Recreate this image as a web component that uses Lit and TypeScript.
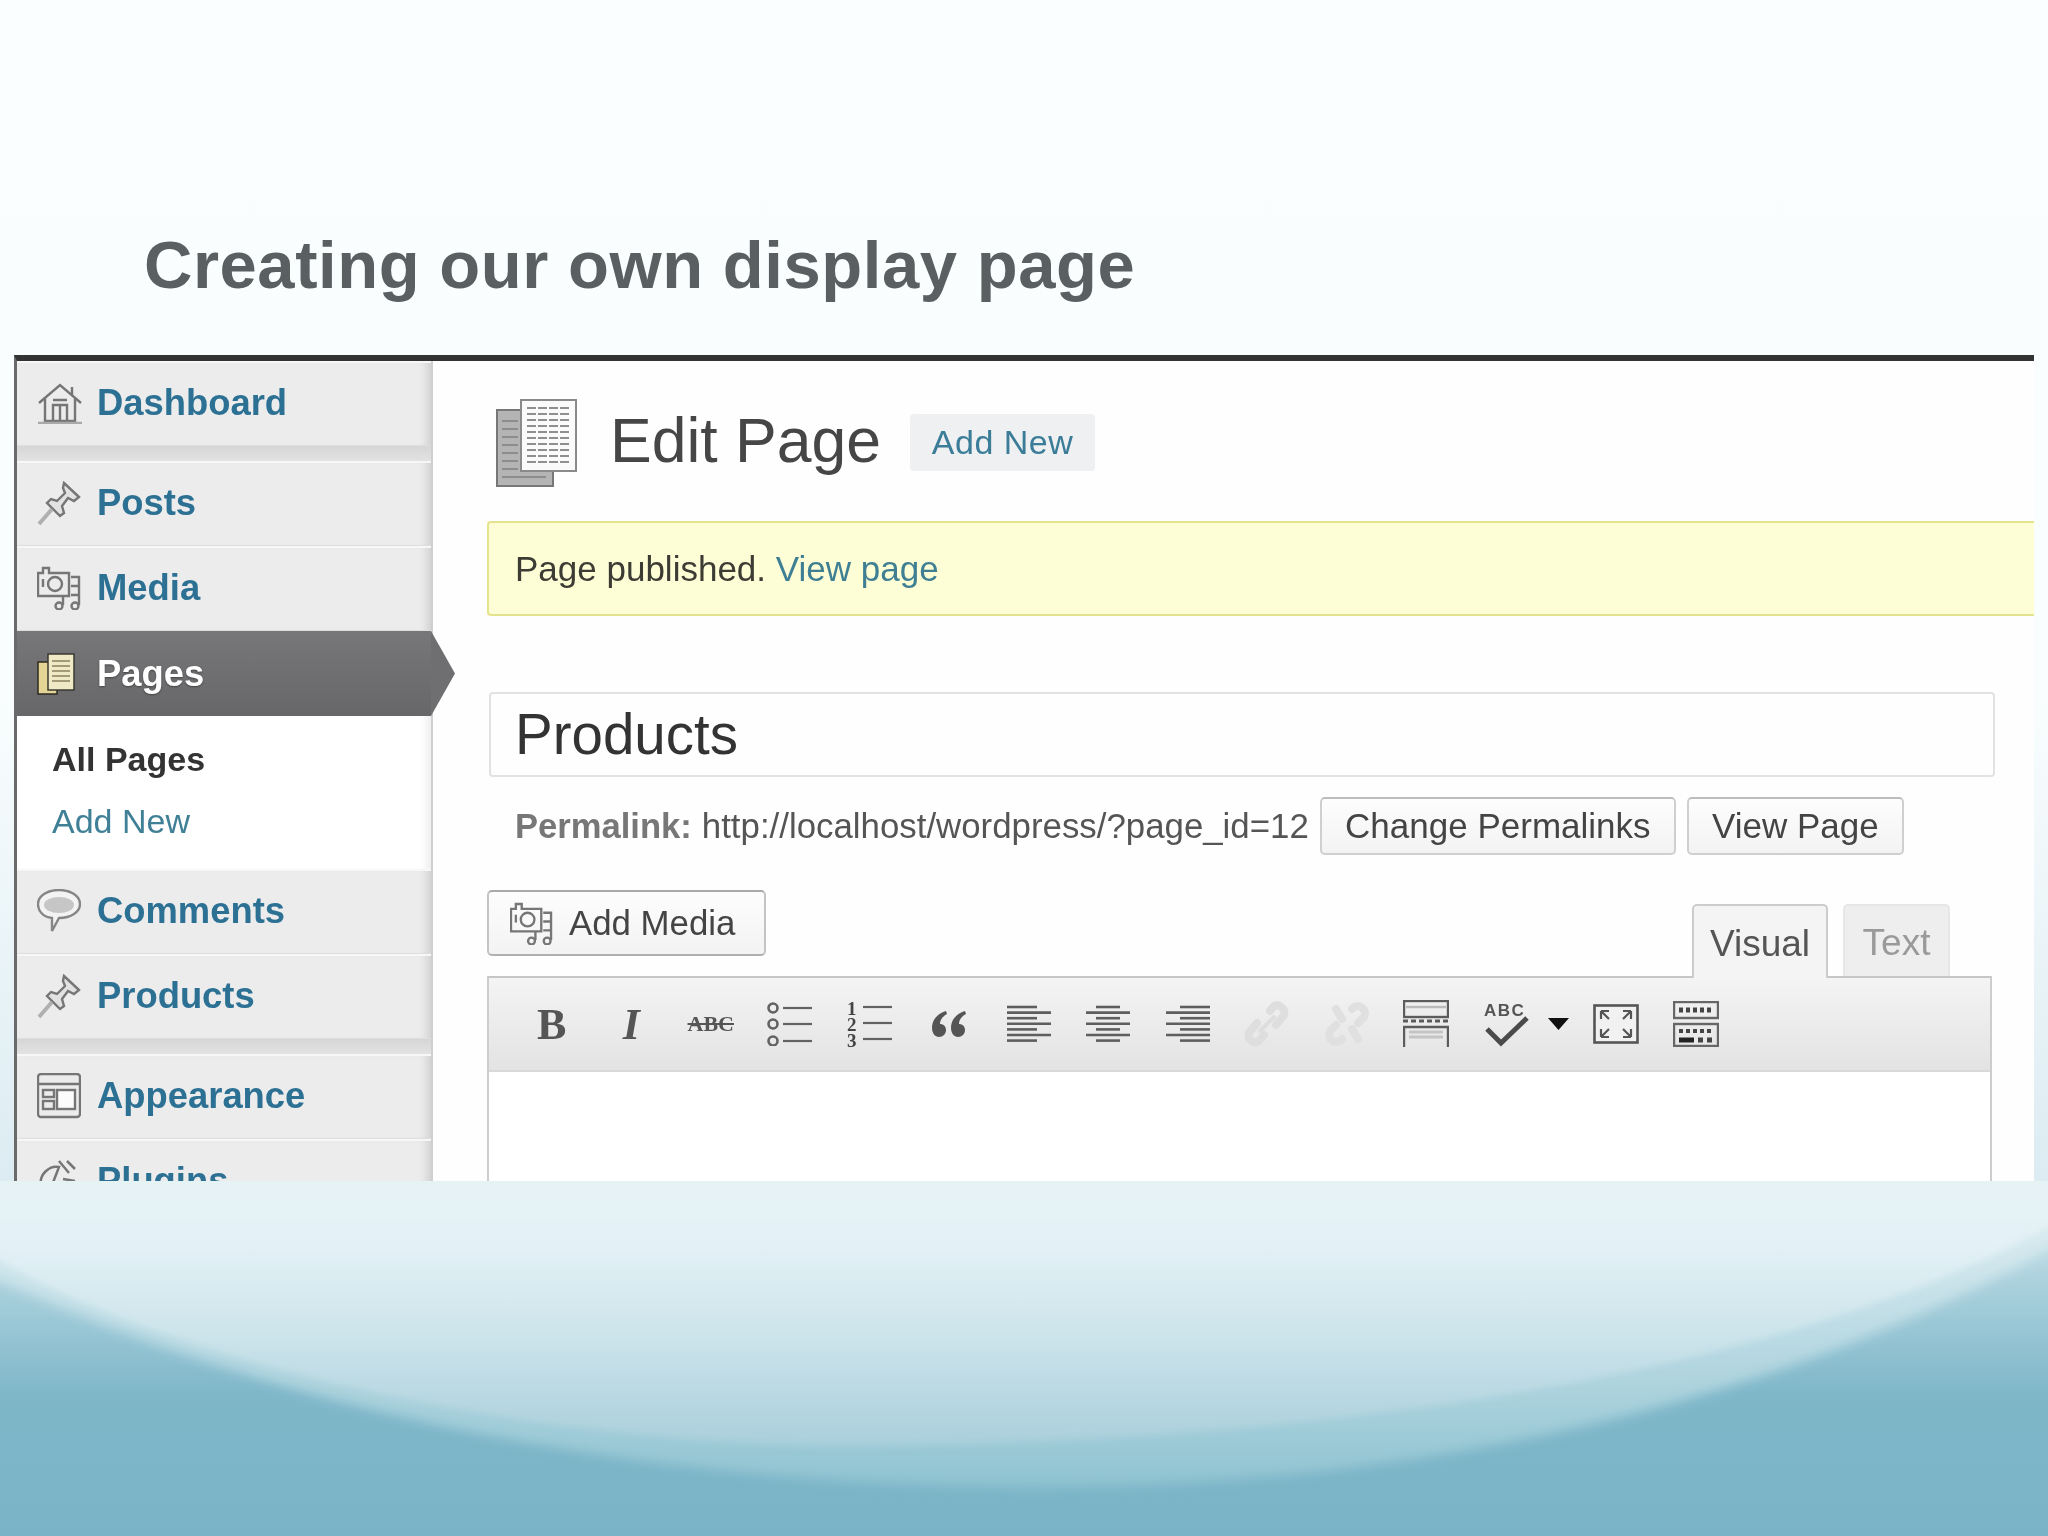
import { LitElement, html, css, svg } from 'lit';
import { customElement } from 'lit/decorators.js';

const STROKE = '#767676';

// sidebar icons
const homeIcon = html`<svg width="46" height="42" viewBox="0 0 46 42" fill="none" stroke=${STROKE} stroke-width="2.4">
  <path d="M2 21 L23 3 L44 21" /><path d="M35 5v8" /><path d="M8 17v22h30v-22" />
  <path d="M16 39V23h14v16M23 23v16M16 18h14" /><path d="M1 41h44" stroke="#aaa" />
</svg>`;
const pinIcon = html`<svg width="44" height="45" viewBox="0 0 44 45" fill="#e2e2e2" stroke=${STROKE} stroke-width="2.4">
  <path d="M27 2 L42 16 L37 20 L31 17 L25 25 L27 32 L23 35 L10 22 L14 18 L20 20 L28 12 L26 7Z" />
  <path d="M15 28 L2 43" stroke="#b0b0b0" stroke-width="4" />
</svg>`;
const mediaIcon = (w = 44) => html`<svg width=${w} height=${w} viewBox="0 0 44 44" fill="none" stroke=${STROKE} stroke-width="2.4">
  <path d="M1 7h5V2h6v5h20v23H1z" /><circle cx="18" cy="18" r="7" /><path d="M6 13v8" />
  <path d="M34 11h8v28M26 30v9M34 20h8M34 29h8" /><circle cx="22" cy="40" r="3.5" /><circle cx="38" cy="40" r="3.5" />
</svg>`;
const pagesActive = html`<svg width="38" height="42" viewBox="0 0 38 42">
  <rect x="1" y="9" width="19" height="32" fill="#e4d596" stroke="#2c2a20" stroke-width="1.5" />
  <rect x="11" y="1" width="26" height="36" fill="#f0e9c6" stroke="#3a3830" stroke-width="1.5" />
  <path d="M15 8h18M15 13h18M15 18h18M15 23h18M15 28h18" stroke="#a49a78" stroke-width="2" />
</svg>`;
const commentIcon = html`<svg width="44" height="44" viewBox="0 0 44 44" stroke="#868686" stroke-width="2.4">
  <path d="M15 29C6 28 1 22 1 15 1 7 10 1 22 1s21 6 21 14-9 14-21 14l-7 13z" fill="#f3f3f3" />
  <ellipse cx="22" cy="16" rx="15" ry="8" fill="#c6c6c6" stroke="none" />
</svg>`;
const appearanceIcon = html`<svg width="44" height="46" viewBox="0 0 44 46" fill="none" stroke=${STROKE} stroke-width="2.4">
  <rect x="1" y="1" width="42" height="43" rx="3" /><path d="M1 11h42" />
  <rect x="6" y="17" width="11" height="7" /><rect x="6" y="28" width="11" height="8" /><rect x="20" y="17" width="18" height="19" fill="#fbfbfb" />
</svg>`;
const pluginIcon = html`<svg width="40" height="44" viewBox="0 0 40 44" fill="none" stroke=${STROKE} stroke-width="2.5">
  <path d="M4 26 C2 16 12 6 22 8 L12 34 C8 34 5 30 4 26z" /><path d="M22 2 L32 14M30 2 L38 10M2 40 L8 32M26 20 L38 22" />
</svg>`;

// editor toolbar icons
const alignIcon = (kind: 'left' | 'center' | 'right') => {
  const rows = [0, 1, 2, 3, 4, 5, 6];
  return html`<svg width="46" height="38" viewBox="0 0 46 38" stroke="#5e5e5e" stroke-width="2.6">
    ${rows.map((i) => {
      const even = i % 2 === 0;
      const wide = kind === 'center' ? (even ? 24 : 44) : even ? 30 : 44;
      const x = kind === 'left' ? 1 : kind === 'center' ? 23 - wide / 2 : 45 - wide;
      return svg`<path d="M${x} ${2 + i * 5.6}h${wide}" />`;
    })}
  </svg>`;
};
const bulletIcon = html`<svg width="46" height="44" viewBox="0 0 46 44" fill="none" stroke="#626262">
  ${[6, 22, 39].map((y) => svg`<circle cx="6" cy=${y} r="4.5" stroke-width="2.6" /><path d="M16 ${y}h29" stroke-width="2.2" />`)}
</svg>`;
const numberIcon = html`<svg width="46" height="46" viewBox="0 0 46 46">
  ${['1', '2', '3'].map((n, i) => svg`<text x="0" y=${14 + i * 16} font-family="Liberation Serif, serif" font-weight="700" font-size="19" fill="#444">${n}</text>
    <path d="M16 ${6 + i * 16}h29" stroke="#626262" stroke-width="2.2" />`)}
</svg>`;
const quoteIcon = html`<svg width="36" height="28" viewBox="0 0 36 28" fill="#555">
  <path d="M15 1C6 4 1 10 1 18c0 5 3 9 7 9s7-3 7-7-3-6-6-6c0-4 3-8 7-10z" />
  <path d="M34 1c-9 3-14 9-14 17 0 5 3 9 7 9s7-3 7-7-3-6-6-6c0-4 3-8 7-10z" />
</svg>`;
const linkIcon = html`<svg width="46" height="46" viewBox="0 0 46 46" fill="none" stroke="#dedede" stroke-width="8" stroke-linecap="round">
  <path d="M26 10 L30 5 C34 2 42 8 40 14 L32 24" /><path d="M20 34 L15 40 C10 44 3 38 5 32 L13 22" /><path d="M16 30 L30 16" stroke-width="4" />
</svg>`;
const unlinkIcon = html`<svg width="46" height="46" viewBox="0 0 46 46" fill="none" stroke="#e0e0e0" stroke-width="8" stroke-linecap="round">
  <path d="M28 8 C34 1 44 8 40 16 L34 22" /><path d="M18 38 C12 45 2 38 6 30 L12 24" /><path d="M12 8 L18 18M34 38 L28 28" />
</svg>`;
const moreIcon = html`<svg width="46" height="48" viewBox="0 0 46 48" fill="none" stroke="#5c5c5c" stroke-width="2.4">
  <rect x="1" y="1" width="44" height="16" /><path d="M3 7h40" stroke="#bbb" />
  <path d="M0 21h46" stroke-width="3" stroke-dasharray="5 3" />
  <path d="M1 47V27h44v20" /><path d="M6 32h34M6 37h34" stroke="#c4c4c4" stroke-width="3" />
</svg>`;
const spellIcon = html`<svg width="46" height="46" viewBox="0 0 46 46">
  <text x="1" y="15" font-family="Liberation Sans, sans-serif" font-weight="700" font-size="17" letter-spacing="1.5" fill="#555">ABC</text>
  <path d="M4 28 L18 42 L44 17" fill="none" stroke="#4a4a4a" stroke-width="5" />
</svg>`;
const dropArrow = html`<svg width="21" height="12" viewBox="0 0 21 12"><path d="M0 0h21L10.5 12z" fill="#111" /></svg>`;
const fullIcon = html`<svg width="46" height="40" viewBox="0 0 46 40" fill="none" stroke="#555" stroke-width="2.6">
  <rect x="1.5" y="1.5" width="43" height="37" fill="#f1f1f1" />
  <path d="M8 7h8M8 7v8M8 7l8 8M38 7h-8M38 7v8M38 7l-8 8M8 33h8M8 33v-8M8 33l8-8M38 33h-8M38 33v-8M38 33l-8-8" stroke-width="2.2" />
</svg>`;
const sinkIcon = html`<svg width="46" height="46" viewBox="0 0 46 46" fill="none" stroke="#666" stroke-width="2.4">
  <rect x="1" y="1" width="44" height="16" /><rect x="1" y="23" width="44" height="22" />
  <path d="M6 9h34" stroke="#444" stroke-width="5" stroke-dasharray="4 3" />
  <path d="M6 30h34" stroke="#444" stroke-width="4" stroke-dasharray="4 3" />
  <path d="M6 39h15" stroke="#222" stroke-width="5" /><path d="M25 39h15" stroke="#444" stroke-width="5" stroke-dasharray="5 4" />
</svg>`;

const menuTop = [
  { label: 'Posts', icon: pinIcon },
  { label: 'Media', icon: mediaIcon() },
];
const menuMid = [
  { label: 'Comments', icon: commentIcon },
  { label: 'Products', icon: pinIcon },
];

@customElement('app-root')
export class AppRoot extends LitElement {
  static styles = css`
    :host {
      display: block;
      font-family: 'Liberation Sans', Arial, sans-serif;
    }
    .slide {
      width: 2048px;
      height: 1536px;
      display: flex;
      flex-direction: column;
      overflow: hidden;
      background: linear-gradient(to bottom, #fbfeff 0, #f9fdfe 700px, #dcecf2 1181px);
    }
    .head-area {
      height: 355px;
      flex: none;
      box-sizing: border-box;
      padding: 226px 0 0 144px;
    }
    h1 {
      margin: 0;
      font-size: 67px;
      line-height: 78px;
      font-weight: 700;
      letter-spacing: 0.55px;
      color: #5a5f61;
    }
    .shot {
      flex: none;
      height: 826px;
      margin: 0 14px;
      box-sizing: border-box;
      border-top: 6px solid #333;
      border-left: 3px solid #6a6a6a;
      display: flex;
      background: #fefefe;
      overflow: hidden;
      filter: blur(0.7px);
    }
    /* sidebar */
    .side {
      width: 414px;
      flex: none;
      display: flex;
      flex-direction: column;
      position: relative;
      border-right: 2px solid #cfcfcf;
    }
    .item {
      flex: none;
      height: 85px;
      box-sizing: border-box;
      padding: 0 0 2px 20px;
      display: flex;
      align-items: center;
      background: #ececec;
      border-top: 2px solid #f7f7f7;
      border-bottom: 1px solid #dedede;
      box-shadow: inset -10px 0 8px -6px rgba(0, 0, 0, 0.12);
      font-size: 36.4px;
      font-weight: 700;
      color: #2c7194;
    }
    .slot {
      width: 60px;
      flex: none;
      display: flex;
    }
    .sep {
      flex: none;
      height: 15px;
      background: linear-gradient(to bottom, #d6d6d6, #e2e2e2);
    }
    .item.active {
      background: linear-gradient(to bottom, #777779, #67676a);
      border: none;
      color: #fff;
      box-shadow: none;
      position: relative;
      padding-top: 2px;
      text-shadow: 0 1px 2px #444;
    }
    .tip {
      position: absolute;
      left: 100%;
      top: 0;
      width: 24px;
      height: 85px;
      background: #6f6f71;
      clip-path: polygon(0 0, 100% 50%, 0 100%);
    }
    .sub {
      flex: none;
      height: 153px;
      box-sizing: border-box;
      padding: 12px 0 0 35px;
      background: #fff;
      box-shadow: inset -10px 0 8px -6px rgba(0, 0, 0, 0.08);
      font-size: 34px;
      line-height: 62px;
    }
    .sub .on {
      font-weight: 700;
      color: #333;
    }
    .sub .link {
      color: #3f8097;
    }
    /* main column */
    .main {
      flex: 1;
      min-width: 0;
      padding: 38px 0 0 54px;
      display: flex;
      flex-direction: column;
    }
    .title-row {
      height: 87px;
      flex: none;
      display: flex;
      align-items: center;
      padding-left: 9px;
    }
    .title-row h2 {
      margin: 0 0 6px 32px;
      font-size: 62.5px;
      font-weight: 400;
      color: #464646;
    }
    .add-new {
      margin-left: 29px;
      width: 185px;
      height: 57px;
      border-radius: 4px;
      background: #eef0f1;
      display: flex;
      align-items: center;
      justify-content: center;
      font-size: 34px;
      letter-spacing: 0.5px;
      color: #3b7c98;
    }
    .notice {
      flex: none;
      margin-top: 35px;
      height: 95px;
      box-sizing: border-box;
      padding-left: 26px;
      display: flex;
      align-items: center;
      background: #fdfdd6;
      border: 2px solid #e4e38e;
      border-right: none;
      border-radius: 4px 0 0 4px;
      font-size: 35px;
      color: #3c3c34;
    }
    .notice span {
      color: #3f7f93;
      margin-left: 0.28em;
    }
    .name {
      flex: none;
      margin: 76px 0 0 2px;
      width: 1506px;
      height: 85px;
      box-sizing: border-box;
      padding-left: 24px;
      display: flex;
      align-items: center;
      border: 2px solid #e2e2e2;
      border-radius: 4px;
      font-size: 56.5px;
      color: #333;
    }
    .perma {
      flex: none;
      margin-top: 20px;
      height: 58px;
      padding-left: 28px;
      display: flex;
      align-items: center;
      font-size: 34.85px;
      color: #555;
    }
    .perma b {
      color: #777;
      font-size: 34.6px;
      margin-right: 10px;
    }
    .btn {
      box-sizing: border-box;
      height: 58px;
      display: flex;
      align-items: center;
      justify-content: center;
      border: 2px solid #cfcfcf;
      border-top-color: #bdbdbd;
      border-radius: 5px;
      background: linear-gradient(to bottom, #fdfdfd, #f3f3f3);
      font-size: 35px;
      color: #444;
    }
    .perma .b1 {
      width: 356px;
      margin-left: 11px;
    }
    .perma .b2 {
      width: 217px;
      margin-left: 11px;
    }
    .media-row {
      flex: none;
      margin-top: 35px;
      height: 86px;
      width: 1505px;
      display: flex;
      justify-content: space-between;
      align-items: flex-start;
    }
    .add-media {
      width: 279px;
      height: 66px;
      gap: 16px;
      justify-content: flex-start;
      padding-left: 21px;
      font-size: 34.8px;
      border-color: #c4c4c4;
      border-top-color: #aaa;
      border-bottom-color: #b0b0b0;
    }
    .tabs {
      display: flex;
      gap: 15px;
      padding-right: 42px;
      margin-top: 14px;
    }
    .tab {
      height: 74px;
      box-sizing: border-box;
      padding: 3px 0 0;
      display: flex;
      align-items: center;
      justify-content: center;
      font-size: 37px;
      border: 2px solid #ccc;
      border-bottom: none;
      border-radius: 5px 5px 0 0;
      background: #f4f4f4;
      color: #555;
      position: relative;
      z-index: 1;
    }
    .tab.visual {
      width: 136px;
    }
    .tab.text {
      width: 107px;
      height: 72px;
      background: #eeeeee;
      border-color: #e6e6e6;
      color: #9a9a9a;
    }
    .editor {
      flex: 1;
      width: 1505px;
      box-sizing: border-box;
      border: 2px solid #cdcdcd;
      border-top-color: #c6c6c6;
      border-bottom: none;
      background: #fff;
    }
    .toolbar {
      height: 94px;
      box-sizing: border-box;
      padding-left: 23px;
      display: flex;
      align-items: center;
      background: linear-gradient(to bottom, #f4f4f4, #e3e3e3);
      border-bottom: 2px solid #d9d9d9;
    }
    .tool {
      width: 79.5px;
      flex: none;
      display: flex;
      align-items: center;
      justify-content: center;
      color: #555;
    }
    .tool.arrow {
      width: 31px;
      justify-content: flex-start;
      padding-left: 2px;
      box-sizing: border-box;
    }
    .serif {
      font-family: 'Liberation Serif', serif;
      font-weight: 700;
    }
    .tool .bold {
      font-size: 44px;
    }
    .tool .ital {
      font-size: 44px;
      font-style: italic;
    }
    .tool .strike {
      font-size: 22px;
      text-decoration: line-through;
    }
    /* footer swoosh */
    .wave {
      flex: none;
      height: 355px;
    }
    .wave svg {
      display: block;
    }
  `;

  renderItem(it: { label: string; icon: unknown }) {
    return html`<div class="item"><span class="slot">${it.icon}</span>${it.label}</div>`;
  }

  renderSide() {
    return html`
      <nav class="side">
        ${this.renderItem({ label: 'Dashboard', icon: homeIcon })}
        <div class="sep"></div>
        ${menuTop.map((it) => this.renderItem(it))}
        <div class="item active">
          <span class="slot">${pagesActive}</span>Pages
          <span class="tip"></span>
        </div>
        <div class="sub">
          <div class="on">All Pages</div>
          <div class="link">Add New</div>
        </div>
        ${menuMid.map((it) => this.renderItem(it))}
        <div class="sep"></div>
        ${this.renderItem({ label: 'Appearance', icon: appearanceIcon })}
        ${this.renderItem({ label: 'Plugins', icon: pluginIcon })}
      </nav>
    `;
  }

  renderToolbar() {
    return html`
      <div class="toolbar">
        <div class="tool"><span class="serif bold">B</span></div>
        <div class="tool"><span class="serif ital">I</span></div>
        <div class="tool"><span class="serif strike">ABC</span></div>
        <div class="tool">${bulletIcon}</div>
        <div class="tool">${numberIcon}</div>
        <div class="tool">${quoteIcon}</div>
        <div class="tool">${alignIcon('left')}</div>
        <div class="tool">${alignIcon('center')}</div>
        <div class="tool">${alignIcon('right')}</div>
        <div class="tool">${linkIcon}</div>
        <div class="tool">${unlinkIcon}</div>
        <div class="tool">${moreIcon}</div>
        <div class="tool">${spellIcon}</div>
        <div class="tool arrow">${dropArrow}</div>
        <div class="tool">${fullIcon}</div>
        <div class="tool">${sinkIcon}</div>
      </div>
    `;
  }

  renderMain() {
    return html`
      <div class="main">
        <div class="title-row">
          <svg width="82" height="88" viewBox="0 0 82 88">
            <rect x="1" y="11" width="56" height="76" fill="#b4b4b4" stroke="#777" stroke-width="2" />
            <rect x="25" y="1" width="55" height="71" fill="#fafafa" stroke="#8a8a8a" stroke-width="2" />
            <path d="M31 9h43M31 15h43M31 21h43M31 27h43M31 33h43M31 39h43M31 45h43M31 51h43M31 57h43M31 63h43" stroke="#8f8f8f" stroke-width="2" stroke-dasharray="9 2" />
            <path d="M6 22h16M6 30h16M6 38h16M6 46h16M6 54h16M6 62h16M6 70h16M6 78h44" stroke="#8c8c8c" stroke-width="2" />
          </svg>
          <h2>Edit Page</h2>
          <span class="add-new">Add New</span>
        </div>
        <div class="notice">Page published.<span>View page</span></div>
        <div class="name">Products</div>
        <div class="perma">
          <b>Permalink:</b>http://localhost/wordpress/?page_id=12
          <span class="btn b1">Change Permalinks</span>
          <span class="btn b2">View Page</span>
        </div>
        <div class="media-row">
          <span class="btn add-media">${mediaIcon(43)}Add Media</span>
          <div class="tabs">
            <span class="tab visual">Visual</span>
            <span class="tab text">Text</span>
          </div>
        </div>
        <div class="editor">${this.renderToolbar()}</div>
      </div>
    `;
  }

  render() {
    return html`
      <div class="slide">
        <div class="head-area"><h1>Creating our own display page</h1></div>
        <section class="shot">${this.renderSide()}${this.renderMain()}</section>
        <div class="wave">
          <svg width="2048" height="355" viewBox="0 0 2048 355">
            <defs>
              <linearGradient id="base" x1="0" y1="0" x2="0" y2="355" gradientUnits="userSpaceOnUse">
                <stop offset="0" stop-color="#dcedf1" />
                <stop offset="0.3" stop-color="#a9d0dc" />
                <stop offset="0.6" stop-color="#7fb7c9" />
                <stop offset="1" stop-color="#7ab3c7" />
              </linearGradient>
              <linearGradient id="mid" x1="0" y1="0" x2="0" y2="306" gradientUnits="userSpaceOnUse">
                <stop offset="0" stop-color="#e6f2f5" />
                <stop offset="0.5" stop-color="#bcdbe4" />
                <stop offset="1" stop-color="#8fc3d1" />
              </linearGradient>
              <linearGradient id="inner" x1="0" y1="0" x2="0" y2="264" gradientUnits="userSpaceOnUse">
                <stop offset="0" stop-color="#e6f3f5" />
                <stop offset="0.25" stop-color="#e3f1f6" />
                <stop offset="0.6" stop-color="#cbe3ea" />
                <stop offset="1" stop-color="#aacfdc" />
              </linearGradient>
              <filter id="softA" x="-5%" y="-5%" width="110%" height="110%"><feGaussianBlur stdDeviation="6" /></filter>
              <filter id="softB" x="-5%" y="-5%" width="110%" height="110%"><feGaussianBlur stdDeviation="3" /></filter>
            </defs>
            <rect width="2048" height="355" fill="url(#base)" />
            <path d="M-60 -60V70L0 100C220 200 560 306 1045 306C1400 306 1760 230 2048 69L2110 30V-60Z" fill="url(#mid)" filter="url(#softA)" />
            <path d="M-60 -60V50L0 79C150 170 500 264 849 264C1250 264 1750 210 2048 46L2110 10V-60Z" fill="url(#inner)" filter="url(#softB)" />
          </svg>
        </div>
      </div>
    `;
  }
}
